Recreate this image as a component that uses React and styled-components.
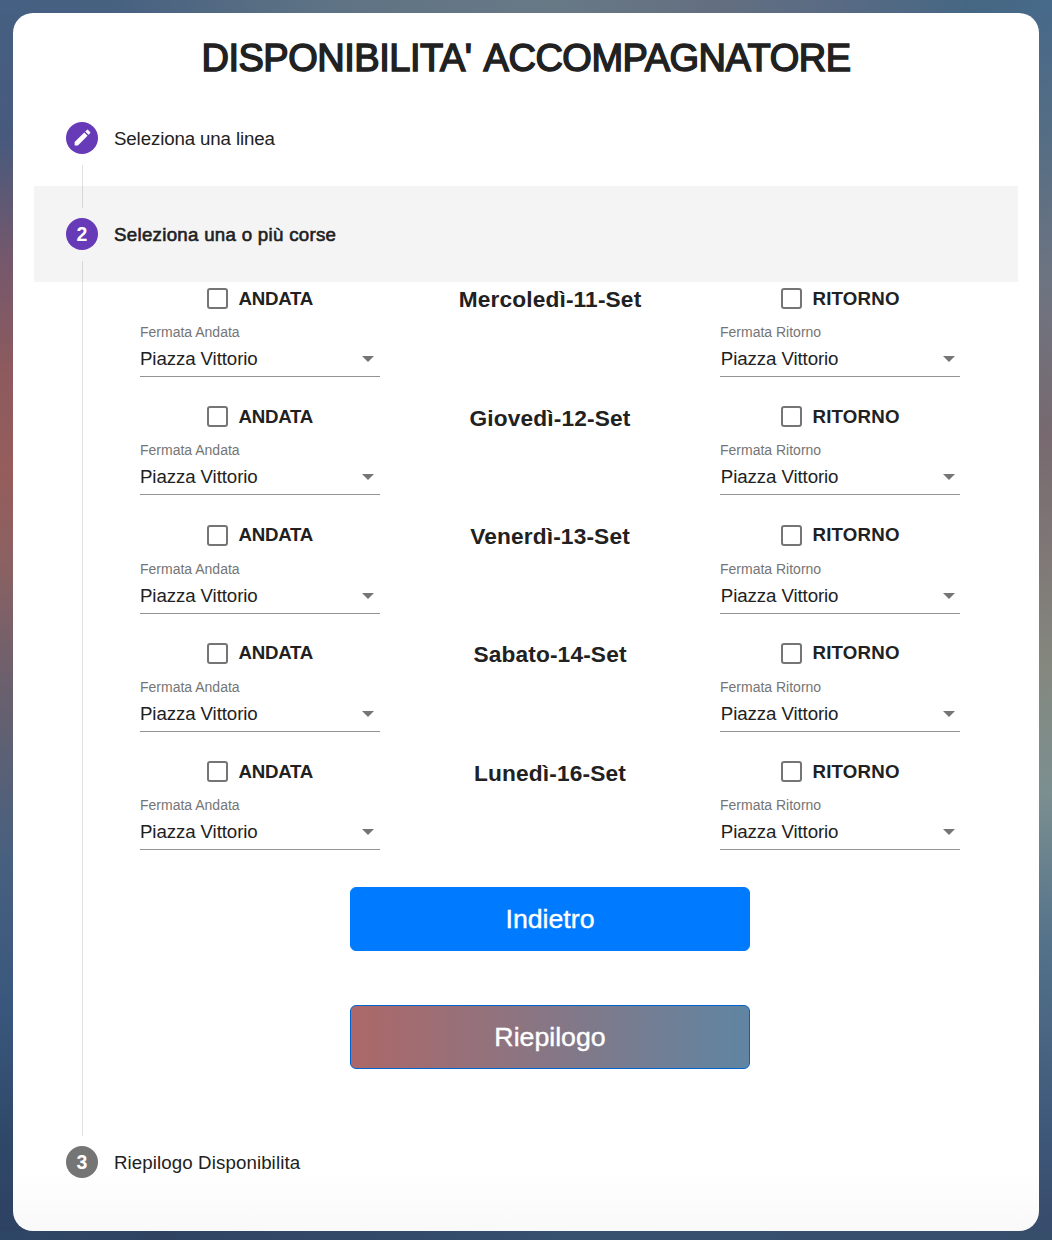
import React from 'react';
import styled, { createGlobalStyle } from 'styled-components';

const Global = createGlobalStyle`
  * { box-sizing: border-box; }
  body {
    margin: 0;
    font-family: "Liberation Sans", Arial, sans-serif;
    color: #212121;
  }
`;

const Page = styled.div`
  height: 1240px;
  padding: 13px 13px 9px;
  background:
    linear-gradient(90deg, #456082 0%, #466080 10%, #5d7284 30%, #687986 52%, #636f80 68%, #586a84 80%, #466783 92%, #476a8a 100%) top / 100% 13px no-repeat,
    linear-gradient(90deg, #2e4665 0%, #2f4361 15%, #36506f 55%, #374e6b 100%) bottom / 100% 9px no-repeat,
    linear-gradient(180deg, #47688a 0%, #536d84 10%, #6e7481 23%, #77696f 35%, #7f7876 45%, #84887f 54%, #7b8f90 64%, #54728a 76%, #3f5a7b 90%, #374a6b 100%) right / 40px 100% no-repeat,
    linear-gradient(180deg, #456082 0%, #475a7d 11%, #75586c 21%, #8d5a5e 30%, #955d5b 38%, #8c6162 45%, #68606e 56%, #48607f 69%, #39577d 81%, #2f4868 92%, #2e4162 100%) left / 40px 100% no-repeat;
`;

const Card = styled.main`
  height: 1218px;
  padding: 24px 21px 0;
  border-radius: 20px;
  background: linear-gradient(180deg, #fff 95%, #f9f9f9 100%);
`;

const Title = styled.h1`
  margin: 0 0 11px;
  height: 42px;
  line-height: 42px;
  text-align: center;
  white-space: nowrap;
  font-size: 38px;
  font-weight: 400;
  letter-spacing: -0.48px;
  word-spacing: 4px;
  -webkit-text-stroke: 1.5px #212121;
`;

const Step = styled.div`
  height: 96px;
  padding: 0 32px;
  display: flex;
  gap: 16px;
  background: ${(p) => (p.$active ? '#f4f4f4' : 'transparent')};
`;

const Track = styled.div`
  width: 32px;
  display: flex;
  flex-direction: column;
  align-items: center;
`;

const Line = styled.i`
  width: 1px;
  height: 22px;
  margin-left: 1px;
  background: ${(p) => (p.$hidden ? 'transparent' : 'rgba(0, 0, 0, 0.12)')};
`;

const Badge = styled.div`
  width: 32px;
  height: 32px;
  margin: 10px 0 11px;
  flex: none;
  display: flex;
  align-items: center;
  justify-content: center;
  border-radius: 50%;
  background: ${(p) => (p.$done ? '#673ab7' : '#757575')};
  color: #fff;
  font-size: 19.5px;
  line-height: 34px;
  font-weight: 700;
  svg { width: 21px; height: 21px; }
`;

const StepLabel = styled.span`
  line-height: 97px;
  font-size: 18.7px;
  letter-spacing: ${(p) => p.$tracking}px;
  -webkit-text-stroke: ${(p) => (p.$active ? '0.6px' : '0')} #212121;
`;

const Content = styled.section`
  height: 832px;
  margin-left: 48px;
  padding: 0 58px 0 57px;
  border-left: 1px solid #e0e0e0;
`;

const Day = styled.div`
  height: 118.3px;
  display: grid;
  grid-template-columns: 240px 1fr 240px;
`;

const DayName = styled.h2`
  margin: 3.4px 0 0;
  line-height: 28px;
  text-align: center;
  font-size: 22.7px;
  letter-spacing: 0.15px;
  font-weight: 700;
`;

const Check = styled.label`
  height: 33px;
  padding-left: ${(p) => p.$inset}px;
  display: flex;
  align-items: center;
  gap: 10.5px;
  font-size: 18.7px;
  font-weight: 700;
  letter-spacing: ${(p) => p.$tracking}px;
`;

const Box = styled.span`
  width: 21px;
  height: 21px;
  border: 2px solid #757575;
  border-radius: 3px;
`;

const FieldLabel = styled.div`
  height: 34px;
  line-height: 35px;
  font-size: 14px;
  color: #757575;
`;

const Select = styled.div`
  height: 28px;
  padding: 0 ${(p) => 6 - p.$shift}px 7px ${(p) => p.$shift}px;
  display: flex;
  align-items: center;
  justify-content: space-between;
  border-bottom: 1px solid #949494;
  font-size: 18.7px;
  letter-spacing: -0.1px;
`;

const Arrow = styled.i`
  border: 6px solid transparent;
  border-top-color: #757575;
  border-bottom: 0;
`;

const Actions = styled.div`
  padding-top: 13.5px;
  display: flex;
  flex-direction: column;
  align-items: center;
  gap: 54px;
`;

const Button = styled.button`
  width: 400px;
  height: 64px;
  padding: 2px 0 0;
  border: 1px solid ${(p) => (p.$gradient ? '#0062cc' : '#007bff')};
  border-radius: 6px;
  background: ${(p) => (p.$gradient ? 'linear-gradient(90deg, #ad6868, #6085a2)' : '#007bff')};
  color: #fff;
  font: 400 26.7px "Liberation Sans", Arial, sans-serif;
  -webkit-text-stroke: 0.4px #fff;
`;

const days = ['Mercoledì-11-Set', 'Giovedì-12-Set', 'Venerdì-13-Set', 'Sabato-14-Set', 'Lunedì-16-Set'];

function Trip({ name, label, inset, tracking, shift = 0 }) {
  return (
    <div>
      <Check $inset={inset} $tracking={tracking}><Box />{name}</Check>
      <FieldLabel>{label}</FieldLabel>
      <Select $shift={shift}>Piazza Vittorio<Arrow /></Select>
    </div>
  );
}

function StepHeader({ badge, label, active, done, first, last, tracking }) {
  return (
    <Step $active={active}>
      <Track>
        <Line $hidden={first} />
        <Badge $done={done}>{badge}</Badge>
        <Line $hidden={last} />
      </Track>
      <StepLabel $active={active} $tracking={tracking}>{label}</StepLabel>
    </Step>
  );
}

const Pencil = () => (
  <svg viewBox="0 0 24 24" fill="#fff">
    <path d="M3 17.25V21h3.75L17.81 9.94l-3.75-3.75L3 17.25zM20.71 7.04a.996.996 0 0 0 0-1.41l-2.34-2.34a.996.996 0 0 0-1.41 0l-1.83 1.83 3.75 3.75 1.83-1.83z" />
  </svg>
);

export default function App() {
  return (
    <Page>
      <Global />
      <Card>
        <Title>DISPONIBILITA' ACCOMPAGNATORE</Title>
        <StepHeader badge={<Pencil />} label="Seleziona una linea" tracking={-0.12} done first />
        <StepHeader badge="2" label="Seleziona una o più corse" tracking={0.29} active done />
        <Content>
          {days.map((day) => (
            <Day key={day}>
              <Trip name="ANDATA" label="Fermata Andata" inset={67} tracking={-0.25} />
              <DayName>{day}</DayName>
              <Trip name="RITORNO" label="Fermata Ritorno" inset={61} tracking={0.2} shift={0.8} />
            </Day>
          ))}
          <Actions>
            <Button>Indietro</Button>
            <Button $gradient>Riepilogo</Button>
          </Actions>
        </Content>
        <StepHeader badge="3" label="Riepilogo Disponibilita" tracking={0.1} last />
      </Card>
    </Page>
  );
}
